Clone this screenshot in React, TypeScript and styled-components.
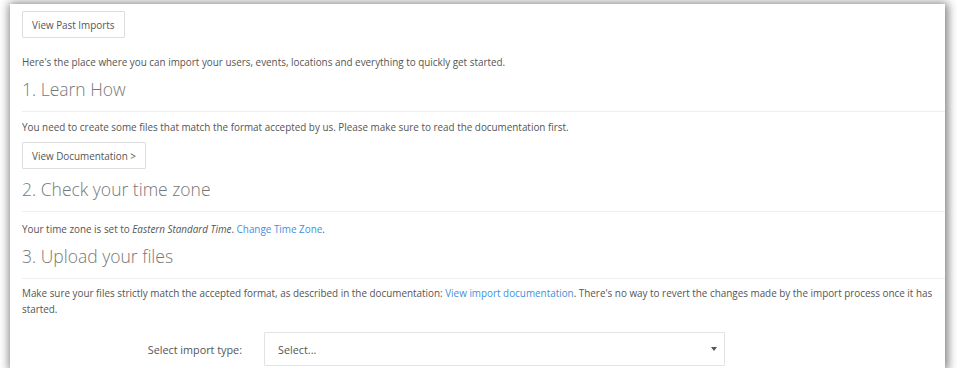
import React from 'react'
import styled, { createGlobalStyle } from 'styled-components'

const GlobalStyle = createGlobalStyle`
  html, body {
    margin: 0;
    padding: 0;
    background: #ffffff;
  }
  body {
    font-family: 'Open Sans', 'Noto Sans', sans-serif;
    color: #555555;
  }
`

const Frame = styled.div`
  width: 935px;
  height: 364px;
  margin: 4px 0 0 10px;
  background: #ffffff;
  box-shadow: 1px 1px 9px 2px rgba(0, 0, 0, 0.5);
  overflow: hidden;
  box-sizing: border-box;
  padding: 7px 0 0 12px;
`

const Button = styled.button<{ $top?: number }>`
  display: block;
  height: 27px;
  margin-top: ${({ $top }) => $top ?? 0}px;
  padding: 0 9px;
  background: #ffffff;
  border: 1px solid #dddddd;
  border-radius: 1px;
  font-family: 'Open Sans', sans-serif;
  font-size: 9.9px;
  color: #555555;
  cursor: pointer;
`

const Text = styled.p<{ $top?: number }>`
  margin: ${({ $top }) => $top ?? 0}px 0 0 0;
  font-size: 9.9px;
  line-height: 16px;
  color: #555555;
`

const Link = styled.a`
  color: #3f8fdc;
  text-decoration: none;
`

const Heading = styled.h2<{ $top?: number }>`
  margin: ${({ $top }) => $top ?? 0}px 0 0 0;
  padding-bottom: 9px;
  border-bottom: 1px solid #eeeeee;
  font-size: 17.5px;
  line-height: 26px;
  font-weight: 300;
  color: #777777;
`

const FormRow = styled.div`
  display: flex;
  align-items: center;
  margin-top: 15px;
`

const Label = styled.label`
  width: 220px;
  text-align: right;
  font-size: 10.8px;
  color: #555555;
`

const SelectBox = styled.div`
  margin-left: 22px;
  width: 461px;
  height: 34px;
  box-sizing: border-box;
  border: 1px solid #e3e3e3;
  border-radius: 1px;
  display: flex;
  align-items: center;
  justify-content: space-between;
  padding: 0 7px 0 13px;
  font-size: 10.8px;
  color: #555555;
`

const Caret = styled.span`
  width: 0;
  height: 0;
  border-left: 3px solid transparent;
  border-right: 3px solid transparent;
  border-top: 4px solid #555555;
`

export default function App() {
  return (
    <>
      <GlobalStyle />
      <Frame>
        <Button>View Past Imports</Button>
        <Text $top={16}>
          Here's the place where you can import your users, events, locations and everything to quickly get started.
        </Text>
        <Heading $top={6}>1. Learn How</Heading>
        <Text $top={7}>
          You need to create some files that match the format accepted by us. Please make sure to read the documentation first.
        </Text>
        <Button $top={7}>View Documentation &gt;</Button>
        <Heading $top={7}>2. Check your time zone</Heading>
        <Text $top={9}>
          Your time zone is set to <em>Eastern Standard Time</em>. <Link href="#">Change Time Zone</Link>.
        </Text>
        <Heading $top={6}>3. Upload your files</Heading>
        <Text $top={6}>
          Make sure your files strictly match the accepted format, as described in the documentation:{' '}
          <Link href="#">View import documentation</Link>. There's no way to revert the changes made by the import
          process once it has started.
        </Text>
        <FormRow>
          <Label>Select import type:</Label>
          <SelectBox>
            <span>Select...</span>
            <Caret />
          </SelectBox>
        </FormRow>
      </Frame>
    </>
  )
}
